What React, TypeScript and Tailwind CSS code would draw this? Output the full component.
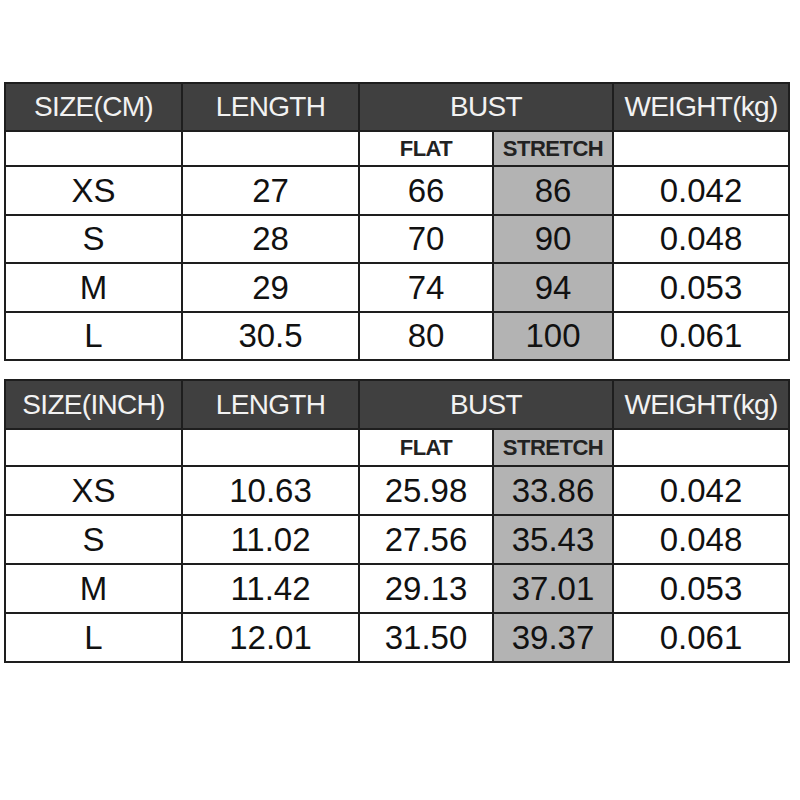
const cm = [
  ["XS", "27", "66", "86", "0.042"],
  ["S", "28", "70", "90", "0.048"],
  ["M", "29", "74", "94", "0.053"],
  ["L", "30.5", "80", "100", "0.061"],
];

const inch = [
  ["XS", "10.63", "25.98", "33.86", "0.042"],
  ["S", "11.02", "27.56", "35.43", "0.048"],
  ["M", "11.42", "29.13", "37.01", "0.053"],
  ["L", "12.01", "31.50", "39.37", "0.061"],
];

const cell = "border-2 border-[#1e1e1e] p-0 text-center";

function SizeTable({
  unit,
  rows,
  tall = false,
}: {
  unit: string;
  rows: string[][];
  tall?: boolean;
}) {
  return (
    <table className="w-[784px] table-fixed border-collapse">
      <colgroup>
        <col className="w-[177px]" />
        <col className="w-[177px]" />
        <col className="w-[134px]" />
        <col className="w-[120px]" />
        <col className="w-[176px]" />
      </colgroup>
      <tbody>
        <tr
          className={
            (tall ? "h-[49px]" : "h-[48px]") +
            " bg-[#404040] text-[28px] tracking-[-0.7px] text-[#f2f2f2]"
          }
        >
          <td className={cell}>{unit}</td>
          <td className={cell}>LENGTH</td>
          <td className={cell} colSpan={2}>BUST</td>
          <td className={cell}>WEIGHT(kg)</td>
        </tr>
        <tr
          className={
            (tall ? "h-[37px]" : "h-[35px]") +
            " text-[22px] font-bold tracking-[-0.5px] text-[#222]"
          }
        >
          <td className={cell}></td>
          <td className={cell}></td>
          <td className={cell}>FLAT</td>
          <td className={cell + " bg-[#b3b3b3]"}>STRETCH</td>
          <td className={cell}></td>
        </tr>
        {rows.map((r) => (
          <tr
            key={r[0]}
            className={(tall ? "h-[49px]" : "h-[48.5px]") + " text-[33px] text-[#111]"}
          >
            <td className={cell}>{r[0]}</td>
            <td className={cell}>{r[1]}</td>
            <td className={cell}>{r[2]}</td>
            <td className={cell + " bg-[#b3b3b3]"}>{r[3]}</td>
            <td className={cell}>{r[4]}</td>
          </tr>
        ))}
      </tbody>
    </table>
  );
}

export default function App() {
  return (
    <div className="flex h-[800px] w-[800px] flex-col gap-[18px] bg-white px-[4px] pt-[82px] font-['Liberation_Sans',Arial,sans-serif] leading-none">
      <SizeTable unit="SIZE(CM)" rows={cm} />
      <SizeTable unit="SIZE(INCH)" rows={inch} tall />
    </div>
  );
}
